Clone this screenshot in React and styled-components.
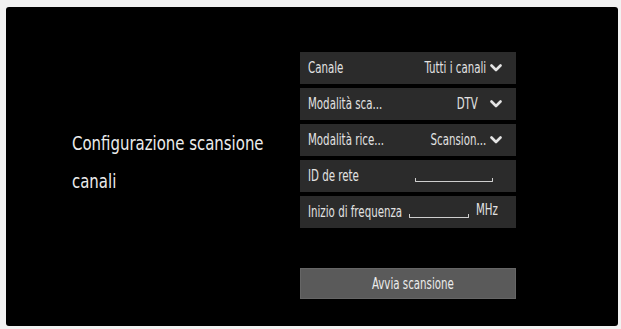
import React from 'react'
import styled, { createGlobalStyle } from 'styled-components'

const Global = createGlobalStyle`
  html, body {
    margin: 0;
    padding: 0;
    background: #f2f2f2;
  }
  body {
    font-family: 'DejaVu Sans Condensed', 'DejaVu Sans', sans-serif;
  }
`

const Screen = styled.div`
  margin: 7px 0 0 6px;
  width: 612px;
  height: 319px;
  background: #000;
  border-radius: 3px;
  display: flex;
  box-sizing: border-box;
  padding-top: 45px;
  color: #e8e8e8;
`

const Side = styled.div`
  width: 294px;
  padding: 72px 0 0 66px;
  box-sizing: border-box;
`

const Title = styled.h1`
  margin: 0;
  font-weight: normal;
  font-size: 20px;
  line-height: 38px;
  color: #ececec;
  white-space: nowrap;
`

// the TV menu uses a condensed face; squeeze the text horizontally
const Narrow = styled.span`
  display: inline-block;
  white-space: nowrap;
  transform: scaleX(${p => p.$scale || 0.76});
  transform-origin: ${p => p.$origin || 'left'} center;
`

const Form = styled.div`
  width: 216px;
  display: flex;
  flex-direction: column;
  gap: 4px;
`

const Row = styled.div`
  height: 32px;
  background: #2b2b2b;
  display: flex;
  align-items: center;
  padding: 0 ${p => p.$right || 14}px 0 8px;
  font-size: 15px;
  color: #e2e2e2;
`

const Label = styled.span`
  flex: 1 1 0;
  min-width: 0;
  white-space: nowrap;
`

const Value = styled.span`
  flex-shrink: 0;
  margin-right: ${p => p.$gap || 4}px;
  white-space: nowrap;
`

const Field = styled.span`
  display: block;
  flex-shrink: 0;
  width: ${p => p.$w}px;
  height: 3px;
  margin-top: 8px;
  border: 1.6px solid #cfcfcf;
  border-top: none;
  border-radius: 0 0 1px 1px;
`

const Unit = styled.span`
  flex-shrink: 0;
  margin-bottom: 5px;
`

const Button = styled.div`
  margin-top: 36px;
  height: 31px;
  padding-left: 10px;
  background: #5a5a5a;
  border: 1px solid #666;
  box-sizing: border-box;
  display: flex;
  align-items: center;
  justify-content: center;
  font-size: 15px;
  color: #ececec;
`

const Chevron = () => (
  <svg width="12" height="8" viewBox="0 0 12 8">
    <polyline points="1.5,1.5 6,6 10.5,1.5" fill="none" stroke="#e4e4e4" strokeWidth="2.6" strokeLinecap="round" strokeLinejoin="round" />
  </svg>
)

export default function App() {
  return (
    <>
      <Global />
      <Screen>
        <Side>
          <Title>
            <Narrow $scale={0.83}>Configurazione scansione</Narrow>
            <br />
            <Narrow $scale={0.83}>canali</Narrow>
          </Title>
        </Side>
        <Form>
          <Row>
            <Label><Narrow>Canale</Narrow></Label>
            <Value><Narrow $origin="right">Tutti i canali</Narrow></Value>
            <Chevron />
          </Row>
          <Row>
            <Label><Narrow>Modalità sca...</Narrow></Label>
            <Value $gap={12}><Narrow $origin="right">DTV</Narrow></Value>
            <Chevron />
          </Row>
          <Row>
            <Label><Narrow>Modalità rice...</Narrow></Label>
            <Value><Narrow $origin="right">Scansion...</Narrow></Value>
            <Chevron />
          </Row>
          <Row $right={23}>
            <Label><Narrow>ID de rete</Narrow></Label>
            <Field $w={76} />
          </Row>
          <Row $right={18}>
            <Label><Narrow>Inizio di frequenza</Narrow></Label>
            <Field $w={58} />
            <Unit><Narrow $origin="right">MHz</Narrow></Unit>
          </Row>
          <Button><Narrow $origin="center">Avvia scansione</Narrow></Button>
        </Form>
      </Screen>
    </>
  )
}
